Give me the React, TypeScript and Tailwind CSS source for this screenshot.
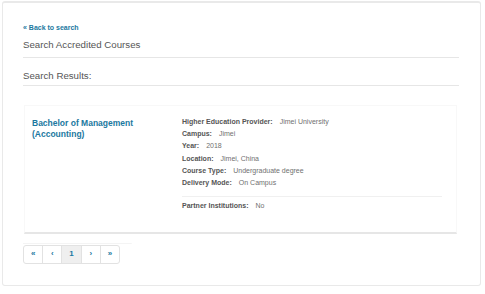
const details: { label: string; value: string }[] = [
  { label: "Higher Education Provider:", value: "Jimei University" },
  { label: "Campus:", value: "Jimei" },
  { label: "Year:", value: "2018" },
  { label: "Location:", value: "Jimei, China" },
  { label: "Course Type:", value: "Undergraduate degree" },
  { label: "Delivery Mode:", value: "On Campus" },
];

function DetailRow({ label, value }: { label: string; value: string }) {
  return (
    <div className="flex h-[12.3px] items-center leading-[12.3px] whitespace-nowrap">
      <span className="font-bold text-[#555]">{label}</span>
      <span className="ml-[7px] text-[#707070]">{value}</span>
    </div>
  );
}

export default function App() {
  const pages = ["«", "‹", "1", "›", "»"];

  return (
    <div
      className="h-[294px] w-[485px] bg-white pt-[1px] pl-[2px]"
      style={{ fontFamily: '"Liberation Sans", Arial, sans-serif' }}
    >
      <div className="h-[285px] w-[479px] rounded-[3px] border border-t-2 border-[#e9e9e9] pt-[19.5px] pr-[21px] pl-[20px]">
        <a className="block h-[10px] text-[7px] leading-[10px] font-bold text-[#1b78a0]">
          « Back to search
        </a>

        <h2 className="mt-[5.3px] h-[14px] text-[9.7px] leading-[14px] text-[#555]">
          Search Accredited Courses
        </h2>
        <div className="mt-[5px] h-px bg-[#e6e6e6]" />

        <h3 className="mt-[11.7px] h-[14px] text-[9.7px] leading-[14px] text-[#555]">
          Search Results:
        </h3>
        <div className="mt-[1.3px] h-px bg-[#e6e6e6]" />

        <div className="mt-[19px] ml-px flex h-[129px] w-[433px] border border-b-2 border-[#f8f8f8] border-b-[#e6e6e6]">
          <div className="w-[157px] pt-[12px] pl-[7px] text-[8.5px] leading-[11px] font-bold text-[#1b78a0]">
            Bachelor of Management
            <br />
            (Accounting)
          </div>
          <div className="w-[260px] pt-[10px] text-[7px]">
            {details.map((d) => (
              <DetailRow key={d.label} label={d.label} value={d.value} />
            ))}
            <div className="mt-[6.5px] h-px bg-[#f0f0f0]" />
            <div className="mt-[2.5px]">
              <DetailRow label="Partner Institutions:" value="No" />
            </div>
          </div>
        </div>

        <div className="mt-[9px] h-px w-[109px] rounded-tr-[3px] bg-[#f4f4f4]" />
        <div className="mt-px flex h-[19px] w-[97px] overflow-hidden rounded-[3px] border border-[#e2e2e2]">
          {pages.map((p, i) => (
            <div
              key={i}
              className={`flex flex-1 items-center justify-center text-[8px] font-bold text-[#1b78a0] ${
                i > 0 ? "border-l border-[#e2e2e2]" : ""
              } ${p === "1" ? "bg-[#efefef]" : ""}`}
            >
              {p}
            </div>
          ))}
        </div>
      </div>
    </div>
  );
}
